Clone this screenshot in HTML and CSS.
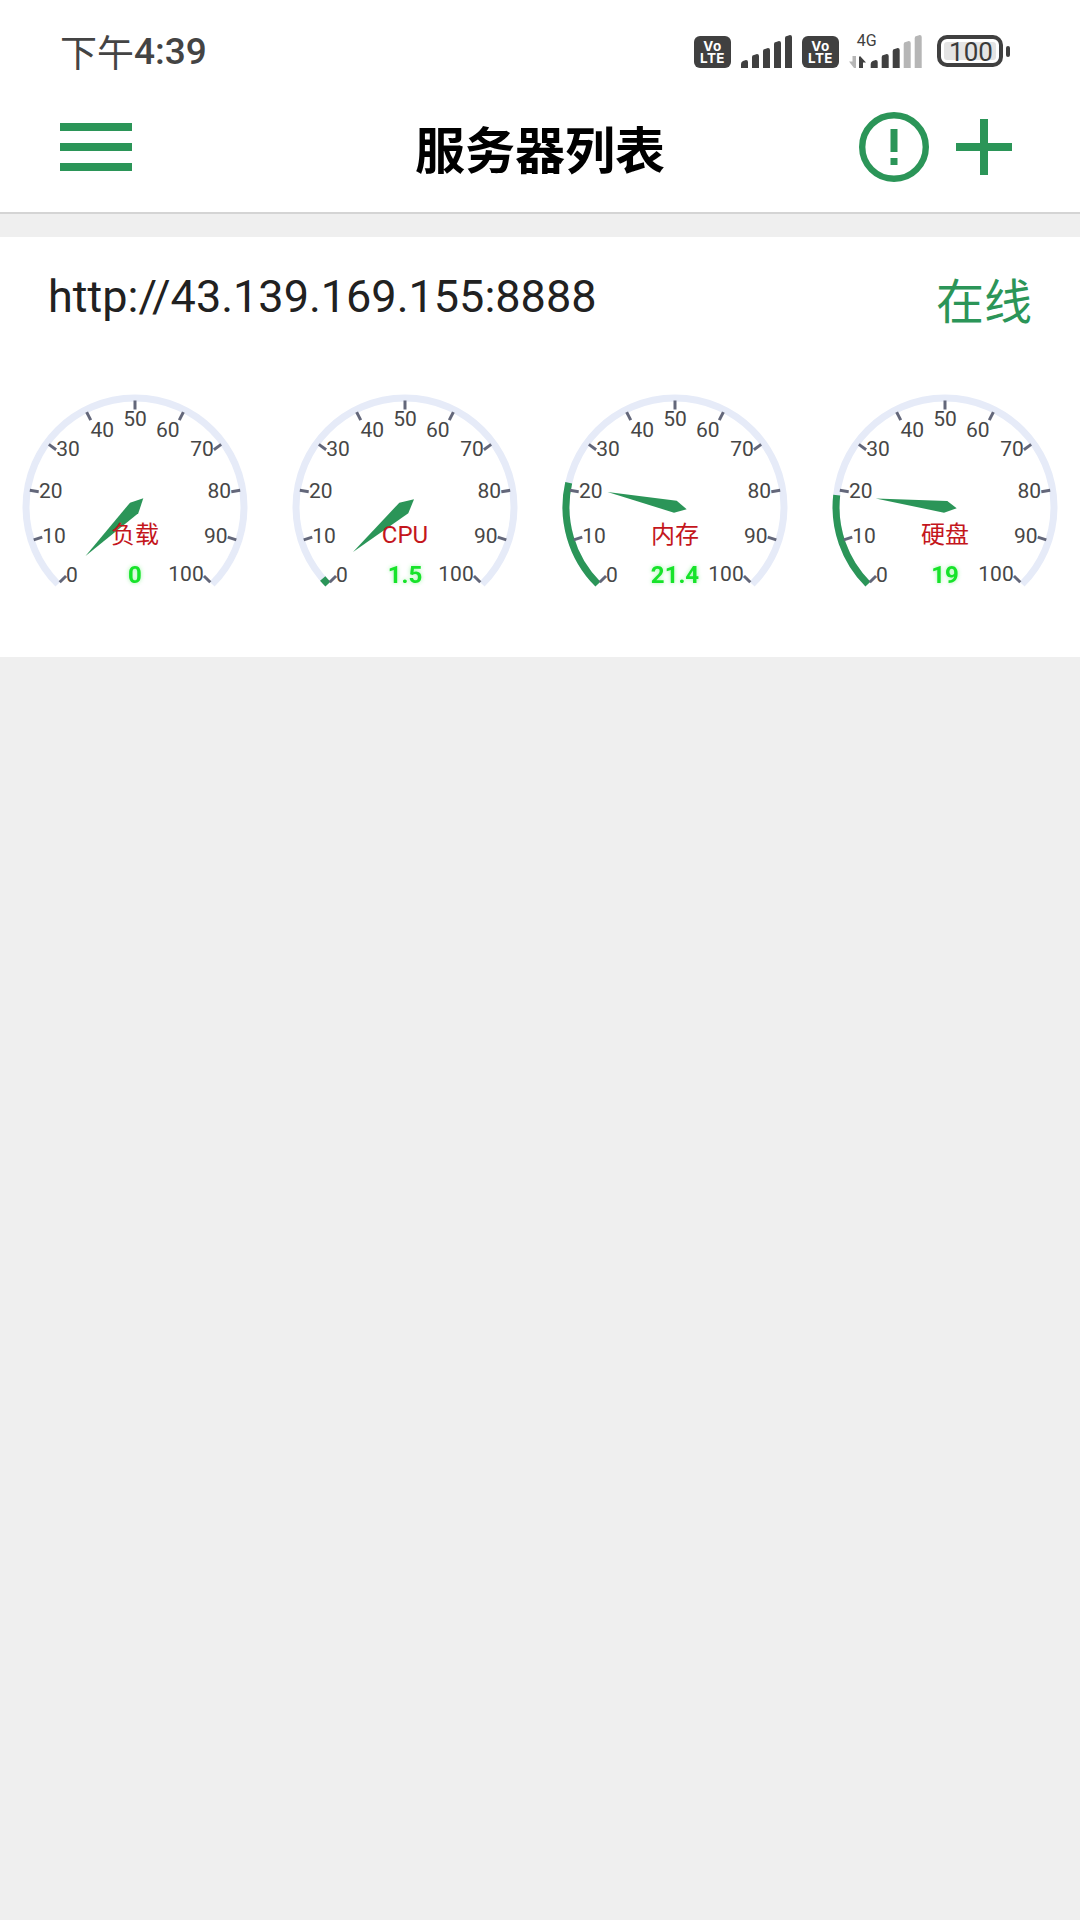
FILE: index.html
```html
<!DOCTYPE html>
<html lang="zh-CN">
<head>
<meta charset="utf-8">
<title>服务器列表</title>
<link rel="stylesheet" href="styles.css">
</head>
<body>
<header class="app-header">
  <div class="status-bar">
    <div class="time"><span class="time-cjk">下午</span><span class="time-num">4:39</span></div>
    <div class="status-icons">
      <div class="volte"><span class="volte-line">Vo</span><span class="volte-line">LTE</span></div>
      <svg class="ic-signal" viewBox="0 0 52 33"><path class="fill-dark" d="M0 33V29Q0 27 2 26L5 25Q7 25 7 27V33ZM11 33V22Q11 20 13 20L16 19Q18 19 18 21V33ZM22 33V16Q22 14 24 14L27 13Q29 13 29 15V33ZM33 33V9Q33 7 35 7L38 6Q40 6 40 8V33ZM44 33V3Q44 1 46 1L49 0Q51 0 51 2V33Z"/></svg>
      <div class="volte"><span class="volte-line">Vo</span><span class="volte-line">LTE</span></div>
      <svg class="ic-mobile" viewBox="0 0 73 38"><text x="17.7" y="16" class="net-text">4G</text><path class="fill-light" d="M3.5 26H7V38H5L0 31.5H3.5Z"/><path class="fill-dark" d="M10 38V27L11 26L17 32.5H14V38Z"/><path class="fill-dark" d="M21.7 38V34Q21.7 32 23.7 31L26.7 30Q28.7 30 28.7 32V38ZM32.7 38V27Q32.7 25 34.7 25L37.7 24Q39.7 24 39.7 26V38ZM43.7 38V21Q43.7 19 45.7 19L48.7 18Q50.7 18 50.7 20V38Z"/><path class="fill-light" d="M54.7 38V14Q54.7 12 56.7 12L59.7 11Q61.7 11 61.7 13V38ZM65.7 38V8Q65.7 6 67.7 6L70.7 5Q72.7 5 72.7 7V38Z"/></svg>
      <svg class="ic-battery" viewBox="0 0 74 36"><rect x="2" y="2" width="62" height="28" rx="8" class="bat-frame"/><rect x="7" y="7" width="52" height="18" rx="3" class="fill-pale"/><text x="34" y="25.5" class="bat-text">100</text><rect x="69" y="11" width="4" height="11" rx="2" class="fill-dark"/></svg>
    </div>
  </div>
  <div class="toolbar">
    <button class="menu-btn" aria-label="菜单"><span class="bar"></span><span class="bar"></span><span class="bar"></span></button>
    <h1 class="title">服务器列表</h1>
    <div class="actions">
      <svg class="ic-alert" viewBox="0 0 70 70"><circle cx="35" cy="35" r="31.8" class="alert-ring"/><rect x="31.5" y="17" width="7" height="23" class="fill-green"/><rect x="31.5" y="46" width="7" height="7" class="fill-green"/></svg>
      <svg class="ic-plus" viewBox="0 0 56 56"><rect x="24" width="8" height="56" class="fill-green"/><rect y="24" width="56" height="8" class="fill-green"/></svg>
    </div>
  </div>
</header>
<main class="content">
  <section class="card">
    <div class="card-head">
      <span class="url">http://43.139.169.155:8888</span>
      <span class="online">在线</span>
    </div>
    <div class="gauges">
      <svg class="gauge" viewBox="0 0 270 220">
        <path class="track" d="M57.9 204.1A109 109 0 1 1 212.1 204.1"/>
        <g class="ticks"><line x1="135" y1="20.5" x2="135" y2="29.5" transform="rotate(-135 135 127)"/><line x1="135" y1="20.5" x2="135" y2="29.5" transform="rotate(-108 135 127)"/><line x1="135" y1="20.5" x2="135" y2="29.5" transform="rotate(-81 135 127)"/><line x1="135" y1="20.5" x2="135" y2="29.5" transform="rotate(-54 135 127)"/><line x1="135" y1="20.5" x2="135" y2="29.5" transform="rotate(-27 135 127)"/><line x1="135" y1="20.5" x2="135" y2="29.5"/><line x1="135" y1="20.5" x2="135" y2="29.5" transform="rotate(27 135 127)"/><line x1="135" y1="20.5" x2="135" y2="29.5" transform="rotate(54 135 127)"/><line x1="135" y1="20.5" x2="135" y2="29.5" transform="rotate(81 135 127)"/><line x1="135" y1="20.5" x2="135" y2="29.5" transform="rotate(108 135 127)"/><line x1="135" y1="20.5" x2="135" y2="29.5" transform="rotate(135 135 127)"/></g>
        <g class="labels"><text x="72" y="195">0</text><text x="54" y="155.7">10</text><text x="50.7" y="110.7">20</text><text x="68" y="69">30</text><text x="102.3" y="50">40</text><text x="135" y="38.7">50</text><text x="167.7" y="50">60</text><text x="202" y="69">70</text><text x="219.3" y="110.7">80</text><text x="215.7" y="155.7">90</text><text x="186" y="194">100</text></g>
        <polygon class="needle" points="85.5,176 130,122.7 143.3,118.3 138.3,133.3"/>
        <text class="g-title" x="135" y="155">负载</text>
        <text class="g-value" x="135" y="195">0</text>
      </svg>
      <svg class="gauge" viewBox="0 0 270 220">
        <path class="track" d="M57.9 204.1A109 109 0 1 1 212.1 204.1"/>
        <path class="progress" d="M57.9 204.1A109 109 0 0 1 52.7 198.5"/>
        <g class="ticks"><line x1="135" y1="20.5" x2="135" y2="29.5" transform="rotate(-135 135 127)"/><line x1="135" y1="20.5" x2="135" y2="29.5" transform="rotate(-108 135 127)"/><line x1="135" y1="20.5" x2="135" y2="29.5" transform="rotate(-81 135 127)"/><line x1="135" y1="20.5" x2="135" y2="29.5" transform="rotate(-54 135 127)"/><line x1="135" y1="20.5" x2="135" y2="29.5" transform="rotate(-27 135 127)"/><line x1="135" y1="20.5" x2="135" y2="29.5"/><line x1="135" y1="20.5" x2="135" y2="29.5" transform="rotate(27 135 127)"/><line x1="135" y1="20.5" x2="135" y2="29.5" transform="rotate(54 135 127)"/><line x1="135" y1="20.5" x2="135" y2="29.5" transform="rotate(81 135 127)"/><line x1="135" y1="20.5" x2="135" y2="29.5" transform="rotate(108 135 127)"/><line x1="135" y1="20.5" x2="135" y2="29.5" transform="rotate(135 135 127)"/></g>
        <g class="labels"><text x="72" y="195">0</text><text x="54" y="155.7">10</text><text x="50.7" y="110.7">20</text><text x="68" y="69">30</text><text x="102.3" y="50">40</text><text x="135" y="38.7">50</text><text x="167.7" y="50">60</text><text x="202" y="69">70</text><text x="219.3" y="110.7">80</text><text x="215.7" y="155.7">90</text><text x="186" y="194">100</text></g>
        <polygon class="needle" points="83,172 129.3,122.7 144,119.3 138.3,133.3"/>
        <text class="g-title" x="135" y="155">CPU</text>
        <text class="g-value" x="135" y="195">1.5</text>
      </svg>
      <svg class="gauge" viewBox="0 0 270 220">
        <path class="track" d="M57.9 204.1A109 109 0 1 1 212.1 204.1"/>
        <path class="progress" d="M57.9 204.1A109 109 0 0 1 28.7 102.8"/>
        <g class="ticks"><line x1="135" y1="20.5" x2="135" y2="29.5" transform="rotate(-135 135 127)"/><line x1="135" y1="20.5" x2="135" y2="29.5" transform="rotate(-108 135 127)"/><line x1="135" y1="20.5" x2="135" y2="29.5" transform="rotate(-81 135 127)"/><line x1="135" y1="20.5" x2="135" y2="29.5" transform="rotate(-54 135 127)"/><line x1="135" y1="20.5" x2="135" y2="29.5" transform="rotate(-27 135 127)"/><line x1="135" y1="20.5" x2="135" y2="29.5"/><line x1="135" y1="20.5" x2="135" y2="29.5" transform="rotate(27 135 127)"/><line x1="135" y1="20.5" x2="135" y2="29.5" transform="rotate(54 135 127)"/><line x1="135" y1="20.5" x2="135" y2="29.5" transform="rotate(81 135 127)"/><line x1="135" y1="20.5" x2="135" y2="29.5" transform="rotate(108 135 127)"/><line x1="135" y1="20.5" x2="135" y2="29.5" transform="rotate(135 135 127)"/></g>
        <g class="labels"><text x="72" y="195">0</text><text x="54" y="155.7">10</text><text x="50.7" y="110.7">20</text><text x="68" y="69">30</text><text x="102.3" y="50">40</text><text x="135" y="38.7">50</text><text x="167.7" y="50">60</text><text x="202" y="69">70</text><text x="219.3" y="110.7">80</text><text x="215.7" y="155.7">90</text><text x="186" y="194">100</text></g>
        <polygon class="needle" points="67.5,112 136.7,120.7 146.7,129.3 134,132.7"/>
        <text class="g-title" x="135" y="155">内存</text>
        <text class="g-value" x="135" y="195">21.4</text>
      </svg>
      <svg class="gauge" viewBox="0 0 270 220">
        <path class="track" d="M57.9 204.1A109 109 0 1 1 212.1 204.1"/>
        <path class="progress" d="M57.9 204.1A109 109 0 0 1 26.7 115.1"/>
        <g class="ticks"><line x1="135" y1="20.5" x2="135" y2="29.5" transform="rotate(-135 135 127)"/><line x1="135" y1="20.5" x2="135" y2="29.5" transform="rotate(-108 135 127)"/><line x1="135" y1="20.5" x2="135" y2="29.5" transform="rotate(-81 135 127)"/><line x1="135" y1="20.5" x2="135" y2="29.5" transform="rotate(-54 135 127)"/><line x1="135" y1="20.5" x2="135" y2="29.5" transform="rotate(-27 135 127)"/><line x1="135" y1="20.5" x2="135" y2="29.5"/><line x1="135" y1="20.5" x2="135" y2="29.5" transform="rotate(27 135 127)"/><line x1="135" y1="20.5" x2="135" y2="29.5" transform="rotate(54 135 127)"/><line x1="135" y1="20.5" x2="135" y2="29.5" transform="rotate(81 135 127)"/><line x1="135" y1="20.5" x2="135" y2="29.5" transform="rotate(108 135 127)"/><line x1="135" y1="20.5" x2="135" y2="29.5" transform="rotate(135 135 127)"/></g>
        <g class="labels"><text x="72" y="195">0</text><text x="54" y="155.7">10</text><text x="50.7" y="110.7">20</text><text x="68" y="69">30</text><text x="102.3" y="50">40</text><text x="135" y="38.7">50</text><text x="167.7" y="50">60</text><text x="202" y="69">70</text><text x="219.3" y="110.7">80</text><text x="215.7" y="155.7">90</text><text x="186" y="194">100</text></g>
        <polygon class="needle" points="65.7,118.5 137.3,121 146.7,128.3 134,132.7"/>
        <text class="g-title" x="135" y="155">硬盘</text>
        <text class="g-value" x="135" y="195">19</text>
      </svg>
    </div>
  </section>
</main>
</body>
</html>
```

FILE: styles.css
```css
* { box-sizing: border-box; }
html, body { margin: 0; padding: 0; }
body {
  width: 1080px;
  height: 1920px;
  overflow: hidden;
  background: #efefef;
  font-family: Roboto, "Noto Sans CJK SC", sans-serif;
}

.app-header {
  height: 214px;
  background: #fff;
  border-bottom: 2px solid #d4d4d4;
}
.status-bar {
  height: 100px;
  display: flex;
  justify-content: space-between;
  align-items: flex-start;
  padding: 30px 69px 0 60px;
}
.time {
  display: flex;
  align-items: center;
  height: 42px;
  color: #444;
}
.time-cjk { font: 400 37px "Noto Sans CJK SC", sans-serif; }
.time-num { font: 500 37px Roboto, sans-serif; }
.status-icons {
  display: flex;
  align-items: flex-start;
  padding-top: 5px;
}
.volte {
  width: 37px;
  height: 32px;
  margin-top: 1px;
  margin-right: 10px;
  padding-top: 4px;
  border-radius: 6px;
  background: #404040;
  color: #fff;
  text-align: center;
}
.volte-line {
  display: block;
  height: 12px;
  font: 700 13.5px/12px Inter, sans-serif;
  letter-spacing: 0.4px;
}
.ic-signal { width: 52px; height: 33px; margin-right: 9px; }
.ic-mobile { width: 73px; height: 38px; margin-top: -5px; margin-right: 15px; }
.ic-battery { width: 74px; height: 36px; }
.fill-dark { fill: #404040; }
.fill-light { fill: #b6b6b6; }
.fill-pale { fill: #e4e4e4; }
.fill-green { fill: #2b9558; }
.net-text {
  font: 400 16px Roboto, sans-serif;
  fill: #404040;
  text-anchor: middle;
}
.bat-frame { fill: none; stroke: #404040; stroke-width: 4; }
.bat-text {
  font: 400 26px Roboto, sans-serif;
  fill: #3a3a3a;
  text-anchor: middle;
}

.toolbar {
  height: 94px;
  display: flex;
  align-items: center;
  justify-content: space-between;
  padding: 0 68px 0 60px;
  position: relative;
}
.menu-btn {
  width: 72px;
  display: flex;
  flex-direction: column;
  gap: 12px;
  padding: 0;
  border: 0;
  background: none;
}
.bar { display: block; width: 72px; height: 8px; background: #2b9558; }
.title {
  position: absolute;
  left: 0;
  right: 0;
  top: 11px;
  margin: 0;
  text-align: center;
  font: 700 50px/72px "Noto Sans CJK SC", sans-serif;
  color: #000;
}
.actions {
  display: flex;
  align-items: center;
  gap: 27px;
}
.ic-alert { width: 70px; height: 70px; display: block; }
.alert-ring { fill: none; stroke: #2b9558; stroke-width: 6.4; }
.ic-plus { width: 56px; height: 56px; display: block; }

.content { padding-top: 23px; }
.card {
  height: 420px;
  background: #fff;
}
.card-head {
  height: 143px;
  display: flex;
  justify-content: space-between;
  align-items: flex-start;
  padding: 32px 48px 0 48px;
}
.url {
  font: 400 45px/56px Roboto, sans-serif;
  color: #212121;
}
.online {
  font: 400 48px/66px "Noto Sans CJK SC", sans-serif;
  color: #2b9558;
  margin-top: -4px;
}
.gauges { display: flex; }
.gauge { width: 270px; height: 220px; display: block; flex: none; }
.track { fill: none; stroke: #e6ebf8; stroke-width: 7; }
.progress { fill: none; stroke: #2b9558; stroke-width: 7; }
.ticks line { stroke: #63677a; stroke-width: 3; }
.labels text {
  font: 400 21px Roboto, sans-serif;
  fill: #464646;
  text-anchor: middle;
  dominant-baseline: central;
}
.needle { fill: #2b9558; }
.g-title {
  font: 400 24px Roboto, "Noto Sans CJK SC", sans-serif;
  fill: #c4161c;
  text-anchor: middle;
  dominant-baseline: central;
}
.g-value {
  font: 700 24px Roboto, sans-serif;
  fill: #17e32a;
  text-anchor: middle;
  dominant-baseline: central;
  filter: drop-shadow(0 0 2px rgba(40, 230, 60, 0.45));
}
```
